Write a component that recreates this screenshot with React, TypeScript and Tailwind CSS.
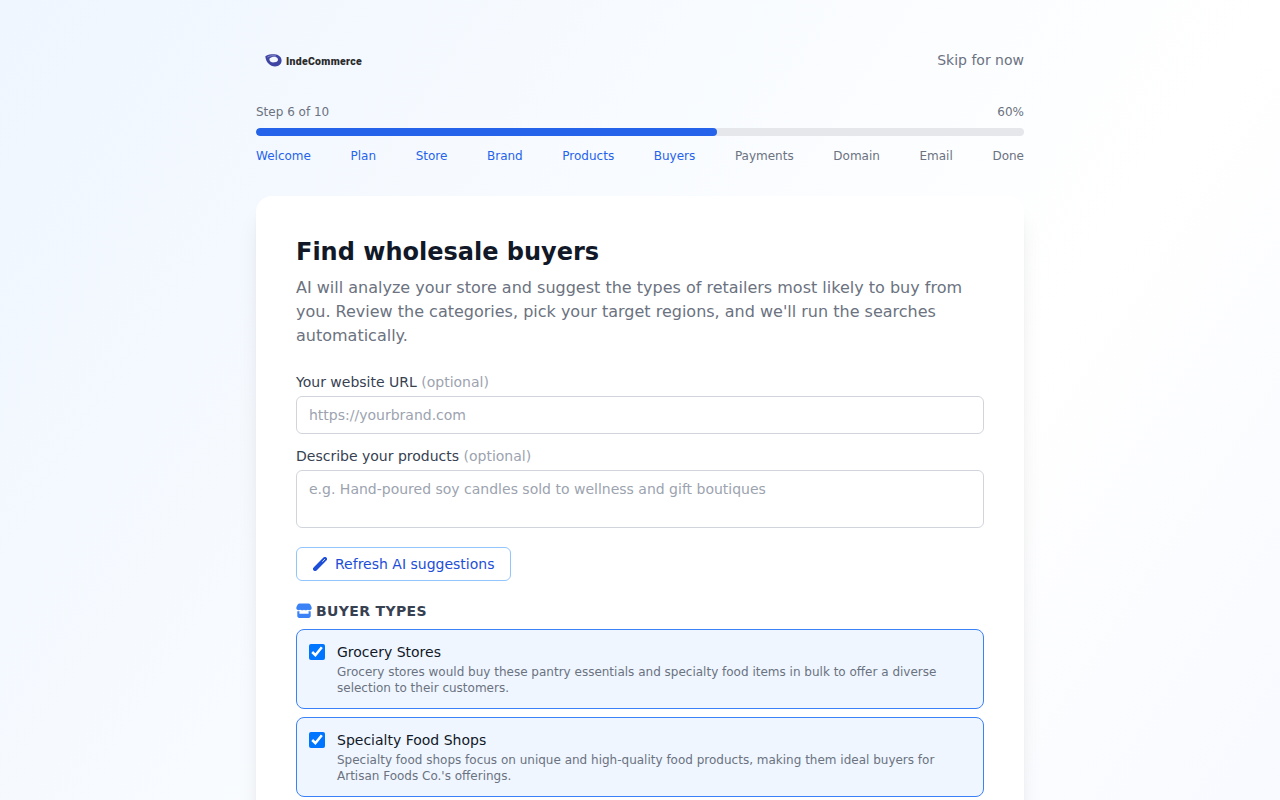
const steps = ['Welcome', 'Plan', 'Store', 'Brand', 'Products', 'Buyers', 'Payments', 'Domain', 'Email', 'Done'];
const current = 6;

const buyerTypes = [
  {
    name: 'Grocery Stores',
    reason:
      'Grocery stores would buy these pantry essentials and specialty food items in bulk to offer a diverse selection to their customers.',
  },
  {
    name: 'Specialty Food Shops',
    reason:
      "Specialty food shops focus on unique and high-quality food products, making them ideal buyers for Artisan Foods Co.'s offerings.",
  },
];

function WandIcon() {
  return (
    <svg width="14" height="14" viewBox="0 0 14 14" className="shrink-0">
      <path d="M2.1 11.9L11.9 2.1" stroke="currentColor" strokeWidth="4.2" strokeLinecap="round" />
      <path d="M9.6 4.4L11.7 2.3" stroke="#fff" strokeWidth="0.8" strokeLinecap="round" />
    </svg>
  );
}

function StoreIcon() {
  return (
    <svg width="16" height="16" viewBox="0 0 16 16" fill="currentColor" className="shrink-0 text-[#3b82f6]">
      <path d="M3.6 0.4h8.8c.8 0 1.5.4 1.9 1.100l1 2.100c.3.500.4 1 .4 1.500 0 1.300-1 2.200-2.200 2.200-.7 0-1.300-.2-1.700-.5-.4.3-1 .5-1.700.5-.8 0-1.600-.2-2.100-.6-.5.4-1.300.6-2.100.6-.7 0-1.300-.2-1.700-.5-.4.3-1 .5-1.700.5C1.300 7.300.3 6.400.3 5.100c0-.5.1-1 .4-1.500l1-2.100C2.100.8 2.800.4 3.600.4z" />
      <path d="M1.300 8.200c.9.200 1.500.1 2.100-.1v2.600h9.200v-2.600c.6.200 1.200.3 2.100.1v4.900c0 1.100-.9 1.900-1.900 1.900H3.200c-1.100 0-1.900-.9-1.900-1.900z" />
    </svg>
  );
}

function Logo() {
  return (
    <div className="flex h-8 items-center pl-[9px]">
      <svg width="17" height="13" viewBox="0 0 17 13" className="shrink-0">
        <path
          fillRule="evenodd"
          fill="#4045a3"
          d="M0.3 2.2C2.5 0.5 6 0.3 9.5 0.3C13.6 0.5 16.6 3 16.6 6.6C16.6 10.2 13.6 12.5 10 12.4C5 12.3 0.9 8.3 0.3 2.2ZM4.400 5.400C4.600 8 7.200 8.800 9.600 8.300C12 7.800 13.400 6.600 12.900 4.900C12 3 9.400 2.600 7.400 2.900C5.400 3.300 4.300 4.100 4.400 5.400Z"
        />
        <path d="M2.400 3.200C4.500 1.700 8 1.300 11 2.100" fill="none" stroke="#a9ace0" strokeWidth="0.7" />
      </svg>
      <span className="ml-1 pt-[3px] font-['Roboto'] text-[10.5px] font-black leading-4 tracking-[0.3px] text-[#2b2b2b]">
        IndeCommerce
      </span>
    </div>
  );
}

export default function App() {
  return (
    <div className="h-screen overflow-hidden font-['DejaVu_Sans',sans-serif]">
      <div className="h-[1900px] bg-[linear-gradient(to_bottom_right,#eff6ff,#ffffff,#eef2ff)] pt-11">
        <div className="mx-auto max-w-3xl">
          <header className="mb-7 flex items-center justify-between">
            <Logo />
            <button className="text-sm text-[#6b7280]">Skip for now</button>
          </header>

          <div className="mb-8">
            <div className="mb-2 flex justify-between text-xs text-[#6b7280]">
              <span>Step 6 of 10</span>
              <span>60%</span>
            </div>
            <div className="h-2 overflow-hidden rounded bg-[#e5e7eb]">
              <div className="h-full w-3/5 rounded bg-[#2563eb]" />
            </div>
            <div className="mt-3 flex justify-between text-xs">
              {steps.map((s, i) => (
                <span key={s} className={i < current ? 'text-[#2563eb]' : 'text-[#6b7280]'}>
                  {s}
                </span>
              ))}
            </div>
          </div>

          <main className="min-h-[1650px] rounded-2xl bg-white p-10 shadow-xl">
            <h1 className="mb-2 text-2xl font-bold text-[#111827]">Find wholesale buyers</h1>
            <p className="mb-6 text-base text-[#6b7280]">
              AI will analyze your store and suggest the types of retailers most likely to buy from you. Review the
              categories, pick your target regions, and we'll run the searches automatically.
            </p>

            <label className="mb-1 block text-sm text-[#374151]">
              Your website URL <span className="text-[#9ca3af]">(optional)</span>
            </label>
            <input
              placeholder="https://yourbrand.com"
              className="mb-3 block h-[38px] w-full rounded-md border border-[#d1d5db] bg-white px-3 text-sm placeholder:text-[#9ca3af]"
            />
            <label className="mb-1 block text-sm text-[#374151]">
              Describe your products <span className="text-[#9ca3af]">(optional)</span>
            </label>
            <textarea
              rows={2}
              placeholder="e.g. Hand-poured soy candles sold to wellness and gift boutiques"
              className="mb-[19px] block w-full resize-none rounded-md border border-[#d1d5db] bg-white px-3 py-2 text-sm placeholder:text-[#9ca3af]"
            />
            <button className="mb-5 flex h-[34px] items-center gap-2 rounded-md border border-[#93c5fd] px-4 text-sm text-[#1d4ed8]">
              <WandIcon />
              Refresh AI suggestions
            </button>

            <h2 className="mb-2 flex items-center gap-1 text-sm font-bold tracking-[0.35px] text-[#374151]">
              <StoreIcon />
              BUYER TYPES
            </h2>
            <div className="flex flex-col gap-2">
              {buyerTypes.map((b) => (
                <label
                  key={b.name}
                  className="flex items-start gap-3 rounded-lg border border-[#3b82f6] bg-[#eff6ff] p-3"
                >
                  <input type="checkbox" defaultChecked className="mt-0.5 size-4 shrink-0" />
                  <span>
                    <span className="mb-0.5 block text-sm text-[#111827]">{b.name}</span>
                    <span className="block text-xs text-[#6b7280]">{b.reason}</span>
                  </span>
                </label>
              ))}
            </div>
          </main>
        </div>
      </div>
    </div>
  );
}
